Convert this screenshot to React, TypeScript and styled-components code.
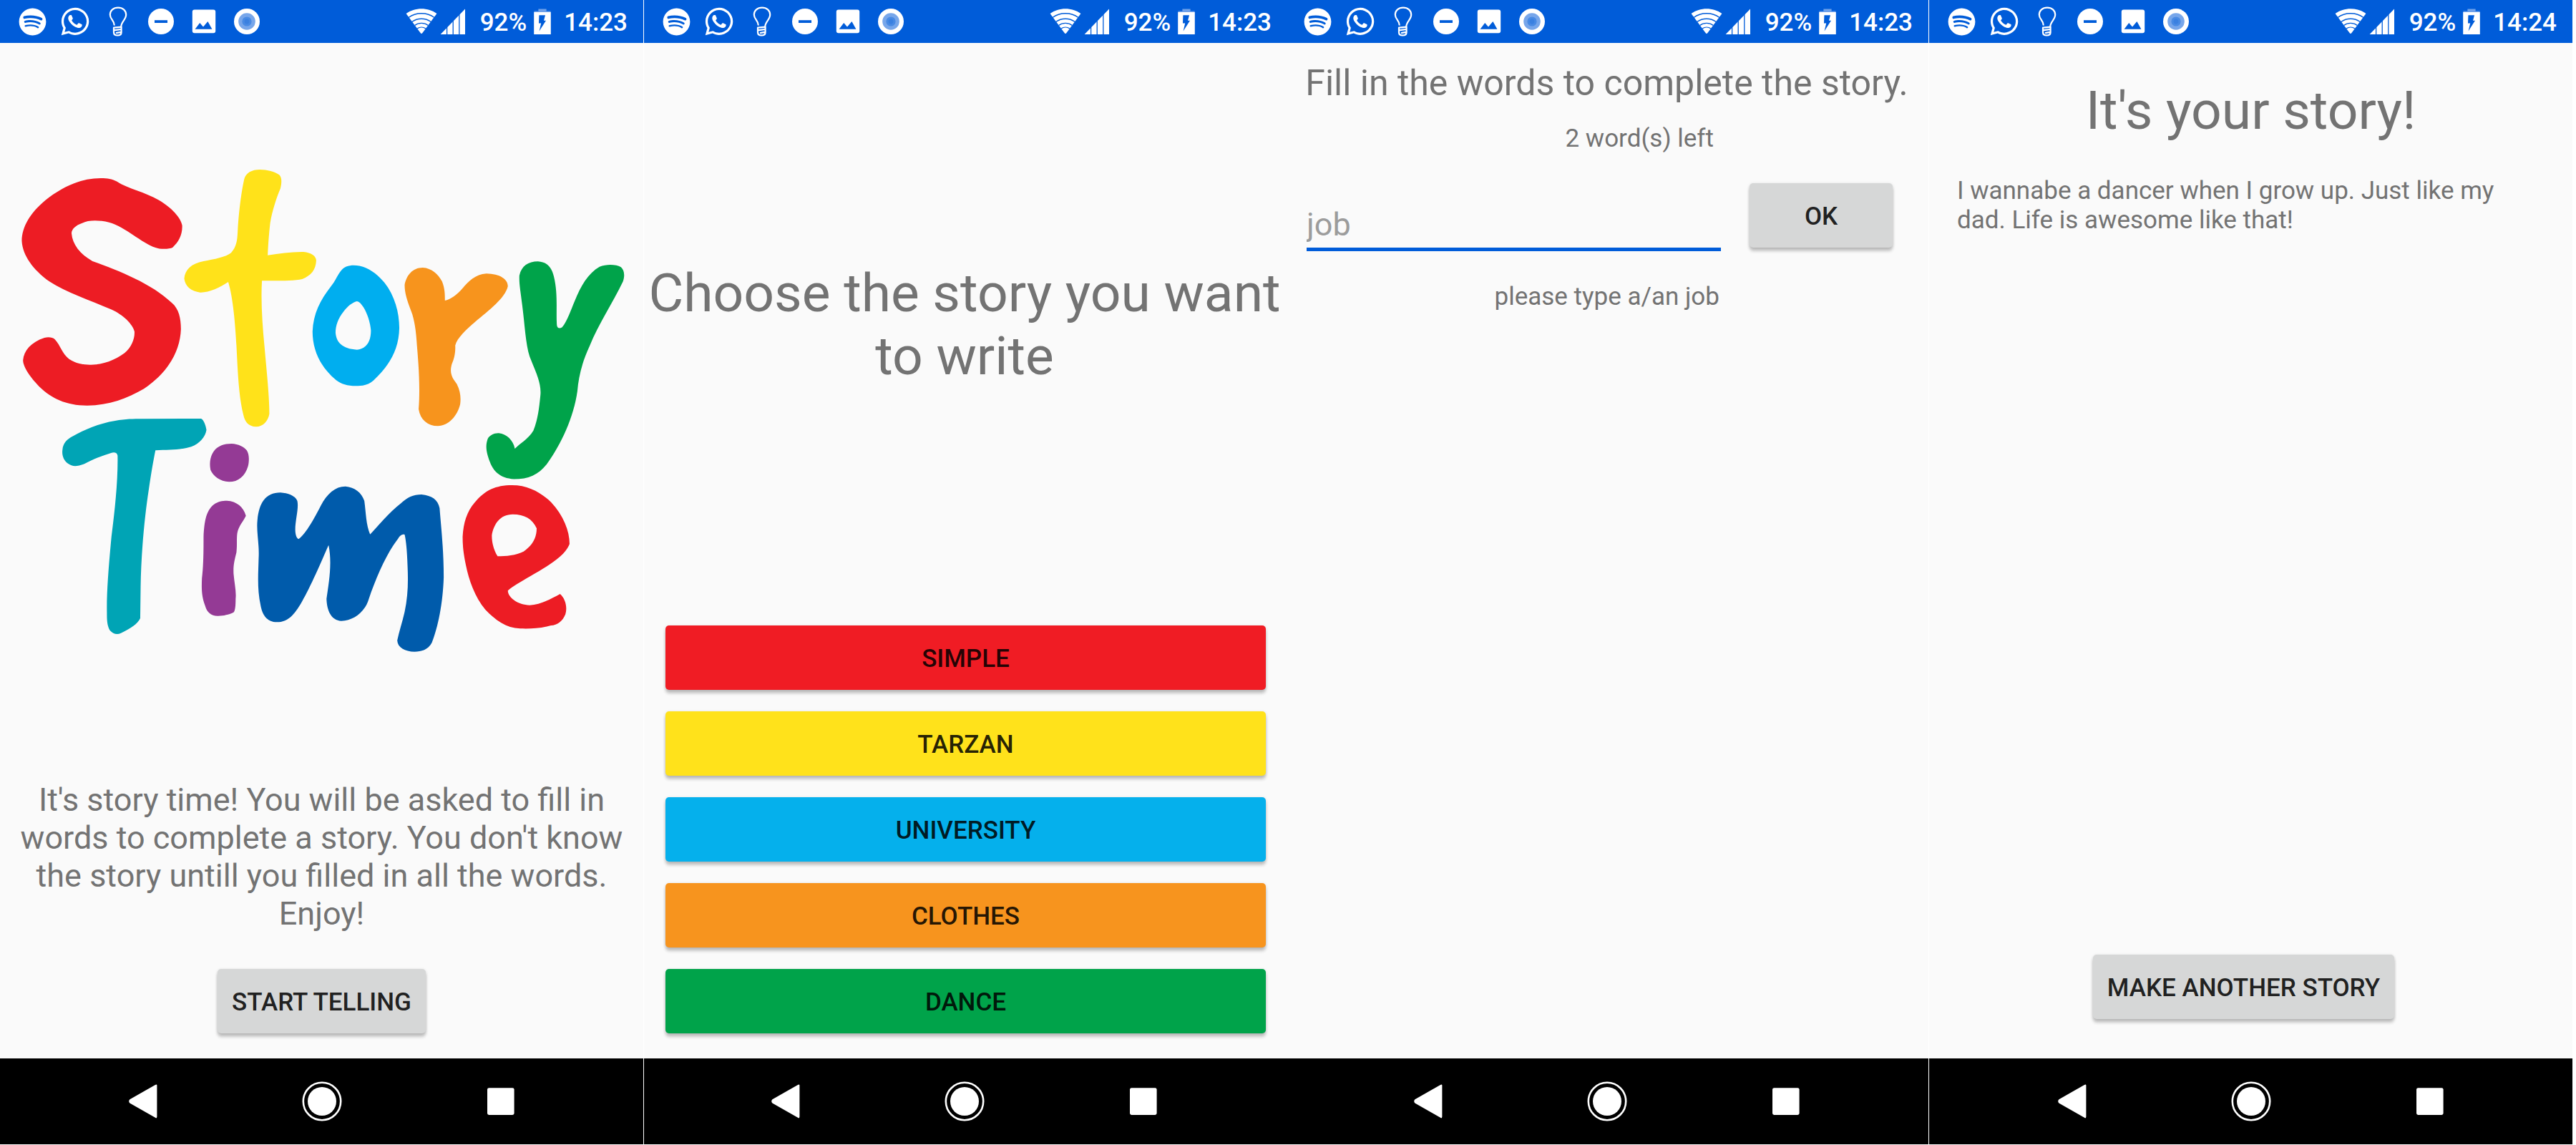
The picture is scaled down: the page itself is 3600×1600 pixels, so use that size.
import React, { useState } from "react";
import styled, { createGlobalStyle } from "styled-components";
import { FaSpotify, FaWhatsapp } from "react-icons/fa";

const GlobalStyle = createGlobalStyle`
  *, *::before, *::after { box-sizing: border-box; }
  body {
    margin: 0;
    background: #ffffff;
    font-family: Roboto, "Noto Sans", sans-serif;
    color: #737373;
  }
  h1, h2, p { margin: 0; font-weight: 400; }
`;

const Gallery = styled.main`
  display: grid;
  grid-template-columns: 900fr 896fr 900fr 899fr;
  min-height: 100vh;
  padding: 0 5px 1px 0;
`;

const Screen = styled.section<{ $divided?: boolean }>`
  display: flex;
  flex-direction: column;
  min-width: 0;
  background: #fafafa;
  border-right: ${(p) => (p.$divided ? "1px solid #ffffff" : "0")};
`;

const StatusBar = styled.header<{ $edge: number }>`
  display: flex;
  align-items: center;
  justify-content: space-between;
  height: 60px;
  padding: 0 ${(p) => p.$edge}px 0 15px;
  background: #005cd9;
  color: #ffffff;
`;

const Notifications = styled.div`
  display: flex;
`;

const Notification = styled.span`
  display: flex;
  align-items: center;
  justify-content: center;
  width: 60px;
  height: 60px;
`;

const System = styled.div`
  display: flex;
  align-items: center;
  gap: 4px;
  svg { display: block; }
`;

const SystemText = styled.span<{ $before: number; $after: number }>`
  padding: 2px ${(p) => p.$after}px 0 ${(p) => p.$before}px;
  font-size: 35px;
  line-height: 41px;
  font-weight: 500;
`;

const NavBar = styled.nav`
  display: flex;
  align-items: center;
  justify-content: center;
  gap: 190px;
  height: 120px;
  background: #000000;
`;

const NavButton = styled.button`
  width: 60px;
  height: 60px;
  padding: 0;
  border: 0;
  background: none;
  svg { display: block; }
`;

const Body = styled.div<{ $bottom: number }>`
  flex: 1;
  display: flex;
  flex-direction: column;
  padding-bottom: ${(p) => p.$bottom}px;
`;

const LogoArt = styled.svg`
  display: block;
  width: 100%;
  margin-top: 140px;
`;

const Intro = styled.p`
  margin-top: auto;
  margin-bottom: 51px;
  padding: 0 20px;
  font-size: 45px;
  line-height: 53px;
  text-align: center;
`;

const Headline = styled.h1<{ $top: number }>`
  margin-top: ${(p) => p.$top}px;
  font-size: 75px;
  line-height: 88px;
  text-align: center;
`;

const Button = styled.button<{ $color?: string }>`
  height: 90px;
  padding: 2px 20px 0;
  border: 0;
  border-radius: 5px;
  background: ${(p) => p.$color ?? "#d6d7d7"};
  box-shadow: 0 5px 4px rgba(0, 0, 0, 0.2), 0 1px 4px rgba(0, 0, 0, 0.14);
  color: rgba(0, 0, 0, 0.87);
  font: 500 35px/41px Roboto, "Noto Sans", sans-serif;
  text-transform: uppercase;
`;

const Centered = styled.div`
  display: flex;
  justify-content: center;
`;

const Bottom = styled(Centered)`
  margin-top: auto;
  padding-right: 20px;
`;

const StoryList = styled.div`
  display: flex;
  flex-direction: column;
  gap: 30px;
  margin-top: auto;
  padding: 0 27px 0 30px;
`;

const FormTitle = styled.h1`
  margin-top: 27px;
  font-size: 50px;
  line-height: 59px;
  text-align: center;
`;

const WordForm = styled.form`
  display: grid;
  grid-template-columns: 1fr 200px;
  column-gap: 40px;
  padding: 0 50px 0 30px;
`;

const SmallText = styled.p`
  font-size: 35px;
  line-height: 41px;
`;

const WordCount = styled(SmallText)`
  grid-column: 1;
  margin-top: 27px;
  padding-right: 10px;
  text-align: right;
`;

const WordInput = styled.input`
  grid-column: 1;
  width: 100%;
  height: 96px;
  margin-top: 41px;
  padding: 25px 0 0;
  border: 0;
  border-bottom: 5px solid #005cd9;
  border-radius: 0;
  outline: none;
  background: none;
  color: #212121;
  font: 400 45px/53px Roboto, "Noto Sans", sans-serif;
  &::placeholder { color: #9c9c9c; opacity: 1; }
`;

const OkButton = styled(Button)`
  grid-column: 2;
  margin-top: 42px;
`;

const Hint = styled.label`
  grid-column: 1;
  margin-top: 43px;
  padding-right: 2px;
  font-size: 35px;
  line-height: 41px;
  text-align: right;
`;

const StoryText = styled(SmallText)`
  margin-top: 48px;
  padding: 0 60px 0 39px;
`;

const BulbIcon = () => (
  <svg width="60" height="60" viewBox="0 0 60 60" fill="none" stroke="#fff" strokeWidth="2.2" strokeLinejoin="round">
    <path d="M24.8 35.5C24.8 28.5 18.8 27 18.8 20.5C18.8 14.5 23.5 10.6 30 10.6S41.2 14.5 41.2 20.5C41.2 27 34.5 30.5 34.2 37.2" />
    <path d="M24 38.6L34.6 37.6V40.8L24 42.4ZM24 42.4V45.2C24 48 26 49.4 29.3 49.4S34.6 48 34.6 45.2V40.8M27 46.2L33.8 44.8" />
  </svg>
);

const BusyIcon = () => (
  <svg width="60" height="60" viewBox="0 0 60 60">
    <circle cx="30" cy="30" r="18" fill="#fff" />
    <path d="M21 28.2H39V32H21Z" fill="#005cd9" />
  </svg>
);

const PictureIcon = () => (
  <svg width="60" height="60" viewBox="0 0 60 60">
    <rect x="13.8" y="13.6" width="32.4" height="32.6" rx="3" fill="#fff" />
    <path d="M17.6 40.8L24.2 32L29 37.4L35.4 30L41.4 40.8Z" fill="#005cd9" />
  </svg>
);

const RecordIcon = () => (
  <svg width="60" height="60" viewBox="0 0 60 60">
    <circle cx="30" cy="30" r="18" fill="#fff" />
    <circle cx="30" cy="30" r="11.8" fill="#77a6ea" />
    <circle cx="30" cy="30" r="6.6" fill="#488ae4" />
    <circle cx="30" cy="30" r="3.4" fill="#3a80e0" />
  </svg>
);

const WifiIcon = () => (
  <svg width="44" height="36" viewBox="0 0 44 36">
    <path d="M0.6 7C12.5-2 31.5-2 43.4 7L23.2 34.2Q22 35.6 20.8 34.2Z" fill="#fff" />
    <g fill="none" stroke="#005cd9" strokeWidth="1.3">
      <path d="M4 12.6C14 4.8 30 4.8 40 12.6" />
      <path d="M8.6 18.6C16.5 12.8 27.5 12.8 35.4 18.6" />
      <path d="M12.6 23.4C18 19.4 26 19.4 31.4 23.4" />
      <path d="M16 28C19.5 25.6 24.5 25.6 28 28" />
    </g>
  </svg>
);

const SignalIcon = () => (
  <svg width="36" height="36" viewBox="0 0 36 36">
    <path d="M0.6 36L35 0.6V36Z" fill="#fff" />
    <path d="M9.6 24V36M18.2 15V36M26.8 6V36" stroke="#005cd9" strokeWidth="1.3" />
  </svg>
);

const BatteryIcon = () => (
  <svg width="24" height="36" viewBox="0 0 24 36">
    <path d="M6.4 0.4H17.6V3.4H23.6V5H0.4V3.4H6.4Z" fill="#6fa1ea" />
    <path d="M0.2 5H23.8V36H0.2Z" fill="#fff" />
    <path d="M7.4 9.2H16L14 16.8H17L7.6 31.6L10.2 20.4H7Z" fill="#005cd9" />
  </svg>
);

const BackIcon = () => (
  <svg width="60" height="60" viewBox="0 0 60 60">
    <path d="M49.4 7.6V51.6Q49.2 54.4 47 52.8L11.4 32.4Q9 30 11.4 27.2L47 7Q49.2 5.6 49.4 7.6Z" fill="#fff" />
  </svg>
);

const HomeIcon = () => (
  <svg width="60" height="60" viewBox="0 0 60 60">
    <circle cx="30" cy="30" r="26.2" fill="none" stroke="#fff" strokeWidth="2.6" />
    <circle cx="30" cy="30" r="20" fill="#fff" />
  </svg>
);

const RecentsIcon = () => (
  <svg width="60" height="60" viewBox="0 0 60 60">
    <rect x="11" y="11.2" width="37.6" height="37.8" rx="2.4" fill="#fff" />
  </svg>
);

const STORY_SHAPES: [string, string][] = [
  ["#ed1c24", "M245 147C262 147 272 150 283 160C310 190 352 205 385 238C418 270 440 315 443 345C444 385 434 415 420 437C412 445 390 446 378 438C345 420 305 350 265 332C240 322 215 322 200 335C185 343 174 360 174 378C176 425 195 465 225 495C290 535 370 590 418 670C435 695 440 735 440 780C438 870 410 960 350 1030C310 1070 265 1100 212 1100C160 1100 125 1070 95 1020C70 975 56 935 56 910C58 870 75 835 108 816C118 812 128 814 133 822C148 850 150 880 168 905C185 925 205 930 222 929C250 929 280 910 303 880C320 855 328 820 327 790C323 760 300 720 270 697C220 660 160 625 120 580C80 530 55 470 53 410C53 350 75 290 110 240C150 185 195 147 245 147Z"],
  ["#ffe21a", "M632 111C650 111 668 120 679 133C686 145 685 165 682 190C672 230 662 285 657 335C654 380 652 430 651 470C680 463 710 455 738 456C757 460 768 472 769 492C768 530 757 555 735 570C715 578 675 577 637 577C634 660 638 760 643 850C648 950 655 1060 655 1135C652 1165 640 1189 623 1189C603 1188 595 1165 592 1140C580 1060 578 950 575 850C572 760 567 650 555 582C535 605 508 627 487 626C465 622 450 600 448 568C450 530 465 505 495 495C520 487 550 478 562 460C575 435 577 410 578 370C580 300 586 210 594 150C598 125 612 111 632 111Z"],
  ["#00aeef", "M860 512C890 512 915 545 935 585C960 640 971 710 971 775C970 870 945 935 908 995C895 1015 880 1018 865 1018C845 1018 830 1010 817 993C780 940 760 870 760 790C762 715 778 660 805 600C815 580 820 555 828 538C835 518 848 512 860 512ZM868 663C856 668 845 685 836 705C822 735 816 765 816 795C818 835 832 862 868 866C892 862 902 830 902 785C900 740 886 680 872 665Z"],
  ["#f7941d", "M1028 522C1050 524 1066 550 1075 580C1082 610 1082 635 1082 660C1095 655 1112 635 1125 608C1140 580 1155 550 1183 547C1215 548 1235 570 1235 600C1228 650 1190 700 1155 750C1135 780 1112 815 1107 848C1108 880 1104 905 1099 925C1092 965 1100 985 1111 1010C1120 1040 1121 1070 1119 1095C1112 1145 1090 1185 1065 1186C1040 1185 1022 1160 1018 1115C1022 1030 1018 930 1014 850C1012 790 1008 740 1000 705C990 660 984 630 984 595C988 555 1003 522 1028 522Z"],
  ["#00a34a", "M1308 496C1330 498 1342 520 1347 560C1357 630 1352 700 1354 760C1354 775 1360 780 1367 772C1380 745 1388 700 1398 660C1412 600 1430 545 1458 518C1475 507 1498 508 1510 520C1518 532 1520 555 1515 580C1490 670 1455 760 1434 850C1415 920 1407 980 1404 1040C1395 1150 1365 1260 1330 1345C1310 1390 1285 1409 1250 1409C1215 1405 1200 1375 1192 1340C1182 1295 1180 1270 1186 1240C1190 1225 1202 1215 1213 1216C1232 1220 1248 1245 1252 1281C1262 1262 1285 1240 1297 1205C1308 1160 1311 1110 1314 1060C1318 1005 1300 950 1288 895C1278 840 1276 760 1270 680C1266 620 1262 590 1263 555C1268 515 1285 496 1308 496Z"],
];

const TIME_SHAPES: [string, string][] = [
  ["#00a4b5", "M345 76L489 75C495 80 500 100 502 122C500 150 485 180 465 193C435 208 410 205 378 208C372 260 368 300 362 370C352 480 343 640 342 780L341 912C335 935 318 955 294 974C285 982 275 978 267 962C260 940 260 915 260 890C259 800 265 680 271 570C280 450 287 330 286 230C285 218 278 214 270 219C250 230 225 245 205 265C185 278 175 275 166 264C154 250 150 225 152 205C153 180 162 162 178 148C205 122 240 95 280 84C305 76 325 76 345 76Z"],
  ["#943a95", "M563 180C580 182 593 192 600 208C607 225 606 260 603 275C596 315 580 340 557 340C535 338 518 315 512 290C508 255 513 225 522 207C530 190 545 180 563 180Z"],
  ["#943a95", "M552 419C575 421 592 445 598 482C592 505 580 525 577 555C575 580 577 600 575 635C570 670 567 690 568 725C570 765 575 800 573 830C573 860 572 880 568 887C555 897 545 901 530 902C512 902 503 885 499 860C490 820 490 790 491 745C495 690 495 620 495 570C497 500 502 460 520 435C530 422 540 419 552 419Z"],
  ["#005bab", "M682 385C700 387 718 398 723 420C727 450 718 500 718 540C718 555 720 575 726 580C745 555 765 490 780 440C795 390 815 359 840 359C862 362 880 385 886 420C890 470 890 520 900 560C920 525 945 470 975 430C990 405 1005 393 1025 393C1050 397 1065 415 1069 450C1072 520 1079 620 1079 740C1077 850 1065 950 1050 1015C1040 1045 1025 1052 1008 1052C985 1052 967 1035 966 1005C970 970 978 930 984 885C992 820 993 760 991 690C990 640 988 590 984 561C978 557 972 565 968 578C940 640 915 740 897 830C888 885 860 922 830 923C805 920 795 880 794 830C800 760 808 680 799 605C780 680 755 780 735 840C715 900 700 928 674 928C648 928 638 895 634 860C625 790 628 730 629 660C631 600 623 550 626 500C630 430 645 385 682 385Z"],
  ["#ed1c24", "M1245 354C1285 354 1315 385 1340 425C1370 480 1385 545 1385 600C1375 650 1335 690 1290 735C1265 760 1245 780 1235 796C1235 825 1260 857 1288 857C1315 855 1340 830 1362 810C1375 830 1380 865 1375 895C1368 925 1355 942 1340 942C1315 955 1290 956 1265 955C1230 952 1205 920 1180 875C1155 825 1140 750 1133 690C1127 640 1125 610 1125 570C1127 510 1135 465 1155 425C1180 375 1205 354 1245 354ZM1247 476C1275 476 1295 495 1305 535C1305 580 1292 610 1273 632C1255 648 1230 652 1210 652C1202 630 1196 600 1196 565C1200 520 1215 476 1247 476Z"],
];

const Logo = () => (
  <LogoArt viewBox="0 200 899 740" role="img" aria-label="Story Time">
    <g transform="translate(0 200) scale(0.5747 0.3333)" fillRule="evenodd">
      {STORY_SHAPES.map(([color, d]) => (
        <path key={d} fill={color} d={d} />
      ))}
    </g>
    <g transform="translate(0 560) scale(0.5747 0.3333)" fillRule="evenodd">
      {TIME_SHAPES.map(([color, d]) => (
        <path key={d} fill={color} d={d} />
      ))}
    </g>
  </LogoArt>
);

interface PhoneProps {
  time: string;
  divided?: boolean;
  edge?: number;
  bottom?: number;
  children: React.ReactNode;
}

const Phone = ({ time, divided, edge = 22, bottom = 35, children }: PhoneProps) => (
  <Screen $divided={divided}>
    <StatusBar $edge={edge}>
      <Notifications>
        <Notification><FaSpotify size={39} /></Notification>
        <Notification><FaWhatsapp size={44} /></Notification>
        <Notification><BulbIcon /></Notification>
        <Notification><BusyIcon /></Notification>
        <Notification><PictureIcon /></Notification>
        <Notification><RecordIcon /></Notification>
      </Notifications>
      <System>
        <WifiIcon />
        <SignalIcon />
        <SystemText $before={16} $after={6}>92%</SystemText>
        <BatteryIcon />
        <SystemText $before={14} $after={0}>{time}</SystemText>
      </System>
    </StatusBar>
    <Body $bottom={bottom}>{children}</Body>
    <NavBar>
      <NavButton aria-label="Back"><BackIcon /></NavButton>
      <NavButton aria-label="Home"><HomeIcon /></NavButton>
      <NavButton aria-label="Recent apps"><RecentsIcon /></NavButton>
    </NavBar>
  </Screen>
);

const STORIES = [
  { name: "Simple", color: "#f01c24" },
  { name: "Tarzan", color: "#ffe21b" },
  { name: "University", color: "#05b0ec" },
  { name: "Clothes", color: "#f7941e" },
  { name: "Dance", color: "#00a34a" },
];

export default function App() {
  const [word, setWord] = useState("");
  return (
    <>
      <GlobalStyle />
      <Gallery>
        <Phone time="14:23" divided>
          <Logo />
          <Intro>
            It's story time! You will be asked to fill in words to complete a story. You don't know
            the story untill you filled in all the words. Enjoy!
          </Intro>
          <Centered><Button>Start telling</Button></Centered>
        </Phone>

        <Phone time="14:23" edge={19}>
          <Headline $top={305}>Choose the story you want to write</Headline>
          <StoryList>
            {STORIES.map((s) => (
              <Button key={s.name} $color={s.color}>{s.name}</Button>
            ))}
          </StoryList>
        </Phone>

        <Phone time="14:23" divided>
          <FormTitle>Fill in the words to complete the story.</FormTitle>
          <WordForm onSubmit={(e) => e.preventDefault()}>
            <WordCount>2 word(s) left</WordCount>
            <WordInput id="word" placeholder="job" value={word} onChange={(e) => setWord(e.target.value)} />
            <OkButton type="submit">OK</OkButton>
            <Hint htmlFor="word">please type a/an job</Hint>
          </WordForm>
        </Phone>

        <Phone time="14:24" bottom={55}>
          <Headline $top={50}>It's your story!</Headline>
          <StoryText>
            I wannabe a dancer when I grow up. Just like my dad. Life is awesome like that!
          </StoryText>
          <Bottom><Button>Make another story</Button></Bottom>
        </Phone>
      </Gallery>
    </>
  );
}
